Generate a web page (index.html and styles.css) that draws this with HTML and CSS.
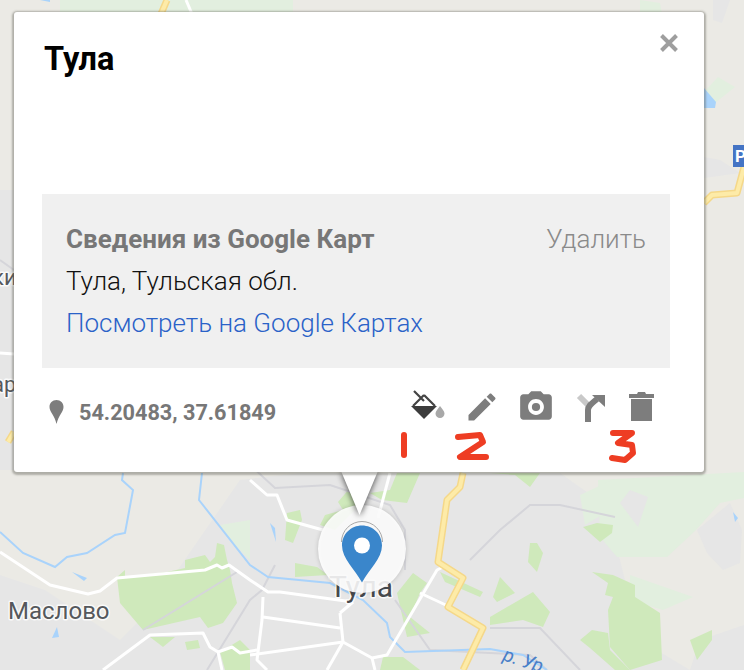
FILE: index.html
```html
<!DOCTYPE html>
<html lang="ru">
<head>
<meta charset="utf-8">
<title>Тула</title>
<link rel="stylesheet" href="styles.css">
</head>
<body>
<main class="stage">
  <svg class="map" viewBox="0 0 744 670" width="744" height="670" aria-hidden="true">
    <rect class="land" width="744" height="670"/>
    <g class="urban">
      <polygon points="0,575 45,590 120,640 150,610 240,480 300,473 560,473 598,500 620,560 640,640 690,670 90,670 0,670"/>
      <polygon points="713,0 730,0 722,23 713,20"/>
      <polygon points="704,157 720,160 740,173 704,178"/>
      <polygon points="0,190 14,190 14,470 0,470"/>
      <polygon points="700,640 744,625 744,670 690,670"/>
    </g>
    <g class="park-light">
      <polygon points="60,0 293,0 293,14 60,14"/>
      <polygon points="640,0 660,3 662,14 640,14"/>
      <polygon points="598,480 744,472 744,498 720,503 696,530 667,557 617,557 600,537"/>
      <polygon points="630,575 693,597 663,610 630,600"/>
      <polygon points="718,77 735,87 715,103 704,92"/>
      <polygon points="220,525 250,520 250,560 230,540"/>
      <polygon points="580,495 612,480 610,510 585,525"/>
    </g>
    <polygon class="urban" points="620,503 630,490 648,497 638,527"/>
    <polygon class="urban" points="697,530 730,503 742,530 740,563 723,570 707,553"/>
    <g class="park">
      <polygon points="117,577 125,570 125,577 167,572 185,568 185,560 205,555 210,562 215,557 217,543 224,545 227,560 230,570 232,583 237,603 223,623 208,628 200,617 143,630 137,623 120,603"/>
      <polygon points="150,637 175,637 163,647"/>
      <polygon points="185,642 198,640 200,648 187,650"/>
      <polygon points="287,513 300,510 302,520 293,543 285,540"/>
      <polygon points="320,525 325,515 343,510 338,502 350,488 360,505 335,530"/>
      <polygon points="295,563 317,567 328,575 295,577"/>
      <polygon points="370,493 390,490 397,473 420,473 407,503 382,500"/>
      <polygon points="397,593 413,573 427,583 420,593 410,617 430,633 407,637"/>
      <polygon points="440,572 483,592 480,597 445,582"/>
      <polygon points="383,657 403,657 420,670 380,670"/>
      <polygon points="490,473 540,473 530,487 515,475"/>
      <polygon points="530,543 537,543 543,553 537,572 528,562"/>
      <polygon points="493,597 500,577 515,593 497,602"/>
      <polygon points="490,617 533,592 550,612 543,627 523,620 490,625"/>
      <polygon points="583,527 597,523 613,525 612,533 600,542"/>
      <polygon points="592,572 613,575 635,585 635,597 660,613 662,660 630,670 610,647 608,610 613,597 605,595 608,583"/>
      <polygon points="690,640 712,630 712,640 697,660"/>
      <polygon points="580,640 592,630 608,633 610,650 630,670 615,670 590,648"/>
      <polygon points="220,652 240,640 250,650 250,670 225,670"/>
    </g>
    <g class="rail">
      <polyline points="143,630 237,572"/>
      <polyline points="207,670 250,600 262,590 275,565"/>
      <polyline points="250,465 275,488 330,485 390,505 405,530 405,570"/>
      <polyline points="395,600 430,650 530,655 547,670"/>
      <polyline points="470,560 500,530 530,505 560,505 615,517"/>
      <polyline points="490,628 540,628 580,670"/>
      <polyline points="0,260 14,270"/>
    </g>
    <g class="water">
      <polyline points="0,532 23,553 55,567 67,557 87,553 115,535 125,533 133,490 122,480 123,473"/>
      <polyline points="202,473 199,500 250,565 268,577 330,583 363,600 387,623 390,637 405,652 490,649 523,655 547,670"/>
    </g>
    <g class="water-fill">
      <polygon points="704,88 716,102 715,108 704,108"/>
      <polygon points="72,572 87,578 84,581"/>
      <polygon points="57,627 52,638 59,637"/>
      <polygon points="270,523 276,542 275,528"/>
      <polygon points="733,512 738,518 735,522"/>
      <polygon points="40,0 50,0 50,2"/>
    </g>
    <g class="road">
      <polyline points="0,552 50,585 88,594 100,591 117,578 205,570 217,565 222,568 229,565 250,580 268,592 280,592 353,602"/>
      <polyline points="250,480 267,495 277,495 287,520 323,530"/>
      <polyline points="263,597 262,620 257,660 267,670"/>
      <polyline points="263,617 340,628"/>
      <polyline points="250,655 343,642"/>
      <polyline points="340,613 353,602"/>
      <polyline points="340,613 343,642 372,658 387,655 437,570 445,566"/>
      <polyline points="343,642 327,670"/>
      <polyline points="372,658 375,670"/>
      <polyline points="420,593 450,607"/>
      <polyline points="390,473 378,518"/>
      <polyline points="103,670 150,635 203,633 210,647 218,652 222,670"/>
      <polyline points="218,652 232,647 240,653 257,650"/>
      <polyline points="0,353 14,354"/>
      <polyline points="186,0 192,14"/>
    </g>
    <g class="highway">
      <polyline points="463,473 460,487 447,500 438,562 463,578 448,607 483,628 463,670"/>
      <polyline points="704,203 712,195 737,193 744,167"/>
      <polyline points="167,0 161,14"/>
      <polyline points="14,432 8,442"/>
    </g>
    <g class="highway-core">
      <polyline points="463,473 460,487 447,500 438,562 463,578 448,607 483,628 463,670"/>
      <polyline points="704,203 712,195 737,193 744,167"/>
      <polyline points="167,0 161,14"/>
      <polyline points="14,432 8,442"/>
    </g>
    <rect class="sign" x="733" y="145" width="11" height="22"/>
    <text class="sign-text" x="735" y="162">Р</text>
    <text class="label label-town" x="8" y="619">Маслово</text>
    <text class="label label-city" x="329" y="597">Тула</text>
    <text class="label label-edge" x="-8" y="285">ки</text>
    <text class="label label-edge" x="-8" y="392">ар</text>
    <text class="label-river" transform="translate(502 660) rotate(18)">р. Ур</text>
    <circle class="halo" cx="362" cy="549" r="44"/>
    <path class="pin-arc" d="M341.500 542a20.500 20.500 0 0 1 41 0"/>
    <path class="pin" d="M362 525.500c-11 0-20 8.500-20 20 0 13 13 24 20 37 7-13 20-24 20-37 0-11.500-9-20-20-20z"/>
    <circle class="pin-hole" cx="362" cy="545.500" r="8"/>
  </svg>

  <svg class="pointer" viewBox="0 0 37 44" width="37" height="44" aria-hidden="true"><path d="M0 0h37L18.500 44z"/></svg>

  <section class="card">
    <header class="card-head">
      <h1 class="title">Тула</h1>
      <svg class="close" viewBox="0 0 18 18" width="18" height="18" aria-hidden="true"><path d="M1.500 1.500l15 15M16.500 1.500l-15 15"/></svg>
    </header>
    <div class="info">
      <div class="info-top">
        <strong class="info-head">Сведения из Google Карт</strong>
        <span class="info-remove">Удалить</span>
      </div>
      <div class="info-addr">Тула, Тульская обл.</div>
      <a class="info-link" href="#">Посмотреть на Google Картах</a>
    </div>
    <footer class="card-foot">
      <div class="position">
        <svg class="coord-pin" viewBox="0 0 15 24" width="15" height="24" aria-hidden="true"><path d="M7.500 0C3.400 0 .500 3.100.500 7c0 5 5 8 7 17 2-9 7-12 7-17 0-3.900-2.900-7-7-7z"/></svg>
        <span class="coords">54.20483, 37.61849</span>
      </div>
      <div class="tools">
        <svg class="tool" viewBox="0 0 36 36" width="36" height="36" aria-hidden="true">
          <path class="bucket-top" d="M0 17L13 4l13 13z"/>
          <path class="bucket-low" d="M0 17h26L13 30z"/>
          <path class="bucket-line" d="M3 2l10 10M13 6L2 17M13 6l11 11"/>
          <path class="bucket-drop" d="M29 17c-2 3-4.500 5-4.500 7.500a4.500 4.500 0 0 0 9 0c0-2.500-2.500-4.500-4.500-7.500z"/>
        </svg>
        <svg class="tool tool-fill" viewBox="0 0 24 24" width="36" height="36" aria-hidden="true"><path d="M3 17.250V21h3.750L17.810 9.940l-3.750-3.750L3 17.250zM20.710 7.040c.39-.39.39-1.020 0-1.410l-2.340-2.340c-.39-.39-1.020-.39-1.410 0l-1.830 1.830 3.750 3.750 1.830-1.830z"/></svg>
        <svg class="tool tool-fill" viewBox="0 0 24 24" width="38" height="38" aria-hidden="true"><path d="M9 2L7.170 4H4c-1.100 0-2 .9-2 2v12c0 1.100.9 2 2 2h16c1.100 0 2-.9 2-2V6c0-1.100-.9-2-2-2h-3.170L15 2H9zm3 15c-2.760 0-5-2.240-5-5s2.240-5 5-5 5 2.240 5 5-2.240 5-5 5z"/><circle cx="12" cy="12" r="2.600"/></svg>
        <svg class="tool" viewBox="0 0 36 36" width="36" height="36" aria-hidden="true">
          <path class="fork-off" d="M7 7l12 12"/>
          <path class="fork-on" d="M16 33V21c0-4 3-6 9-11"/>
          <path class="fork-head" d="M20 6h13v12z"/>
        </svg>
        <svg class="tool tool-fill" viewBox="0 0 36 36" width="36" height="36" aria-hidden="true"><path d="M6 10h21v22H6zM4 5h8l1-2h7l1 2h8v4H4z"/></svg>
      </div>
    </footer>
  </section>

  <svg class="marks" viewBox="0 0 744 670" width="744" height="670" aria-hidden="true">
    <path d="M404 435v20"/>
    <path d="M458 437l22-2 3 7-23 15h26"/>
    <path d="M613 433h19l-14 10 14 2 1 8-8 7-13-2"/>
  </svg>
</main>
</body>
</html>
```
FILE: styles.css
```css
* { box-sizing: border-box; }
html, body { margin: 0; padding: 0; }
body { font-family: Roboto, "Liberation Sans", sans-serif; background: #ebeae5; }
.stage { position: relative; width: 744px; height: 670px; overflow: hidden; }
.map { position: absolute; left: 0; top: 0; display: block; }
.marks { position: absolute; left: 0; top: 0; pointer-events: none; }
.marks path { fill: none; stroke: #ee3d23; stroke-width: 6; stroke-linecap: round; stroke-linejoin: round; }
.pointer { position: absolute; left: 341px; top: 471px; overflow: visible; filter: drop-shadow(0 1px 3px rgba(0,0,0,.7)); }
.pointer path { fill: #fff; }

.land { fill: #ebeae5; }
.urban, .urban polygon { fill: #e6e6e6; }
.park polygon { fill: #cfe9bb; }
.park-light polygon { fill: #e2efdf; }
.rail polyline { fill: none; stroke: #d5d5da; stroke-width: 2; }
.water polyline { fill: none; stroke: #a9d3fb; stroke-width: 2; }
.water-fill polygon { fill: #a9d3fb; }
.road polyline { fill: none; stroke: #fff; stroke-width: 3; stroke-linejoin: round; }
.highway polyline { fill: none; stroke: #f5d889; stroke-width: 7; stroke-linejoin: round; }
.highway-core polyline { fill: none; stroke: #fdeba8; stroke-width: 4; stroke-linejoin: round; }
.sign { fill: #4474c4; }
.sign-text { font: 700 17px Roboto, sans-serif; fill: #fff; }
.label { font-family: Roboto, sans-serif; fill: #55585c; paint-order: stroke; stroke: rgba(255,255,255,.8); stroke-width: 3px; stroke-linejoin: round; }
.label-town { font-size: 24px; }
.label-city { font-size: 30px; fill: #47494d; }
.label-edge { font-size: 22px; }
.label-river { font: italic 19px Roboto, sans-serif; fill: #4a7fc8; }
.halo { fill: rgba(255,255,255,.88); filter: drop-shadow(0 0 2px rgba(0,0,0,.2)); }
.pin-arc { fill: none; stroke: #a8a8a8; stroke-width: 1; }
.pin { fill: #3a86cb; }
.pin-hole { fill: #fff; }

.card {
  position: absolute; left: 14px; top: 12px; width: 690px; height: 460px;
  display: flex; flex-direction: column;
  padding: 0 34px 0 28px;
  background: #fff; border-radius: 3px;
  box-shadow: 0 1px 2px 2px rgba(90,90,80,.42);
}
.card-head { height: 182px; display: flex; justify-content: space-between; align-items: flex-start; margin-right: -8px; }
.title { margin: 28px 0 0 2px; font-size: 32.500px; line-height: 38px; font-weight: 700; color: #000; }
.close { margin-top: 22px; }
.close path { fill: none; stroke: #9e9e9e; stroke-width: 4; }

.info { height: 174px; background: #f0f0f0; padding: 27px 24px 0; font-size: 26px; line-height: 36px; }
.info-top { display: flex; justify-content: space-between; }
.info-head { font-weight: 700; color: #777; }
.info-remove { color: #8a8a8a; font-weight: 300; }
.info-addr { margin-top: 6px; color: #111; font-weight: 300; }
.info-link { display: block; margin-top: 6px; color: #2a62c8; font-weight: 300; text-decoration: none; }

.card-foot { display: flex; align-items: center; justify-content: space-between; padding: 20px 0 0 7px; }
.position { display: flex; align-items: center; padding-top: 10px; }
.coord-pin { flex: none; }
.coord-pin path { fill: #7d7d7d; }
.coords { margin-left: 15px; font-size: 21.670px; font-weight: 700; color: #777; }
.tools { margin-right: 9px; display: flex; align-items: center; gap: 17px; }
.tool { flex: none; display: block; }
.tool-fill path, .tool-fill circle { fill: #7d7d7d; }
.bucket-top { fill: #fff; }
.bucket-low { fill: #3c3c3c; }
.bucket-line { fill: none; stroke: #444; stroke-width: 2.200; }
.bucket-drop { fill: #a8a8a8; }
.fork-off { fill: none; stroke: #c9c9c9; stroke-width: 6; }
.fork-on { fill: none; stroke: #7d7d7d; stroke-width: 6; }
.fork-head { fill: #7d7d7d; }
```
